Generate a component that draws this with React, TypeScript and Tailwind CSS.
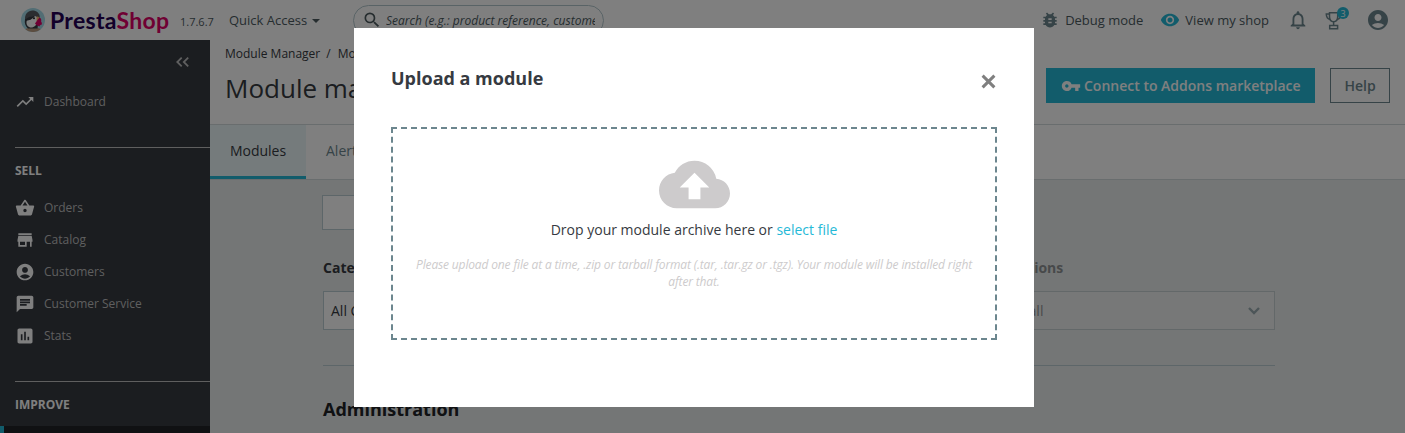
import type { ReactNode } from "react";
import type { IconType } from "react-icons";
import {
  MdAccountCircle,
  MdAssessment,
  MdBugReport,
  MdChat,
  MdCloudUpload,
  MdNotificationsNone,
  MdRemoveRedEye,
  MdSearch,
  MdShoppingBasket,
  MdStore,
  MdTrendingUp,
  MdVpnKey,
} from "react-icons/md";

function Puffin() {
  return (
    <svg className="h-6 w-6 shrink-0" viewBox="0 0 24 24">
      <circle cx="12" cy="12" r="12" fill="#a4dbe8" />
      <path d="M4.500 21.400c1-2.400 14-2.400 15 0A12 12 0 0 1 4.500 21.400z" fill="#b99a80" />
      <path d="M4 12C3.500 6 7 2.500 11.500 2.500c4 0 7 2.500 7.300 6.500L17 12z" fill="#565a60" />
      <path d="M4 11c-.8 4 .5 7.500 3 9.500h9.500l.5-4-5-3z" fill="#363a41" />
      <path d="M5.500 14c.5-4 4.500-6.500 8.500-6 2.500.5 3 3 2.500 5.500-.6 3.500-3.300 6-6.300 6-3 0-5-2.500-4.700-5.500z" fill="#fff" />
      <path d="M4 12.500c2-3.500 6-5 10-4.500-2 2.500-5 4.500-9.500 5z" fill="#363a41" />
      <path d="M15.700 8.500c1.800-.3 3 .8 3.100 2.500l-.8 2.500-2.500-.5z" fill="#f6b36a" />
      <path d="M16.500 12l2-2.500c1.800 1 2 2.500 1.600 4 .7 1 1 2 .7 3-1 .2-1.800.5-2.300 2-2-.8-4-1.800-4.500-3z" fill="#df0067" />
      <circle cx="13" cy="10.300" r="1" fill="#1b1d20" />
    </svg>
  );
}

function Trophy() {
  return (
    <svg className="h-[22px] w-[20px]" viewBox="0 0 20 22" fill="none" stroke="#6c868e" strokeWidth="1.5">
      <path d="M5.500 3.800h8.200v3.700c0 3-1.600 5.200-4.100 5.200S5.500 10.500 5.500 7.500z" />
      <path d="M5.500 5H2.300c0 3 1.200 5 4 5.500M13.700 5h3.200c0 3-1.200 5-4 5.500" />
      <path d="M9.600 12.700v3.600M5.700 16.600h7.900v3.200H5.700z" />
    </svg>
  );
}

function MenuItem({ icon: Icon, children }: { icon: IconType; children: ReactNode }) {
  return (
    <li className="flex h-8 items-center gap-[9px] pl-[15px] text-[12px] text-[#bebebe]">
      <Icon className="h-5 w-5 text-white" />
      <span>{children}</span>
    </li>
  );
}

function MenuTitle({ children }: { children: ReactNode }) {
  return (
    <h2 className="ml-[15px] border-t border-[#bebebe] pt-[14px] text-[12px] leading-[18px] font-bold text-white">
      {children}
    </h2>
  );
}

function Header() {
  return (
    <header className="flex h-10 shrink-0 items-center bg-white text-[13px] text-[#4c5a5f]">
      <div className="flex w-[229px] shrink-0 items-center pl-[21px]">
        <Puffin />
        <span className="ml-[5px] w-[120px] font-['Lato'] text-[23px] leading-10 font-bold tracking-[0.3px] text-[#250054]">
          Presta<span className="text-[#df0067]">Shop</span>
        </span>
        <span className="ml-[10px] pt-[4px] text-[11px]">1.7.6.7</span>
      </div>
      <div className="flex w-[124px] shrink-0 items-center gap-[5px] pt-px">
        Quick Access
        <span className="border-x-4 border-t-4 border-x-transparent border-t-[#4c5a5f]" />
      </div>
      <div className="flex h-[31px] w-[251px] shrink-0 items-center rounded-full border border-[#b3c7cd] pr-2 pl-2">
        <MdSearch className="h-5 w-5 shrink-0 text-[#4c5a5f]" />
        <span className="ml-1 overflow-hidden pt-px text-[12px] whitespace-nowrap italic">
          Search (e.g.: product reference, customer name…)
        </span>
      </div>
      <div className="ml-auto flex items-center pr-[15px]">
        <MdBugReport className="h-5 w-5 text-[#6c868e]" />
        <span className="ml-[5px] pt-px">Debug mode</span>
        <MdRemoveRedEye className="ml-[17px] h-5 w-5 text-[#25b9d7]" />
        <span className="ml-[5px] pt-px">View my shop</span>
        <MdNotificationsNone className="ml-[18px] h-[22px] w-[22px] text-[#6c868e]" />
        <span className="relative ml-[15px]">
          <Trophy />
          <span className="absolute -top-[2px] left-[13px] flex h-3 w-3 items-center justify-center rounded-full bg-[#25b9d7] text-[9px] leading-none text-white">
            3
          </span>
        </span>
        <MdAccountCircle className="ml-[22px] h-6 w-6 text-[#6c868e]" />
      </div>
    </header>
  );
}

function Sidebar() {
  return (
    <nav className="w-[210px] shrink-0 bg-[#363a41]">
      <div className="flex h-[43px] items-center justify-end pr-[21px]">
        <svg className="h-[10px] w-[13px]" viewBox="0 0 13 10" fill="none" stroke="#bebebe" strokeWidth="1.8">
          <path d="M5.700.7L1.300 5l4.400 4.300M12.200.7L7.800 5l4.400 4.300" />
        </svg>
      </div>
      <ul className="pt-[3px]">
        <MenuItem icon={MdTrendingUp}>Dashboard</MenuItem>
      </ul>
      <div className="h-[29px]" />
      <MenuTitle>SELL</MenuTitle>
      <ul className="pt-[12px] pb-[29px]">
        <MenuItem icon={MdShoppingBasket}>Orders</MenuItem>
        <MenuItem icon={MdStore}>Catalog</MenuItem>
        <MenuItem icon={MdAccountCircle}>Customers</MenuItem>
        <MenuItem icon={MdChat}>Customer Service</MenuItem>
        <MenuItem icon={MdAssessment}>Stats</MenuItem>
      </ul>
      <MenuTitle>IMPROVE</MenuTitle>
      <div className="mt-[12px] h-8 border-l-4 border-[#25b9d7] bg-[#202226]" />
    </nav>
  );
}

function Toolbar() {
  return (
    <div className="flex h-[85px] justify-between border-b border-[#d3dadd] bg-white pr-[15px] pl-[15px] text-[#363a41]">
      <div>
        <p className="pt-[5px] text-[12px] leading-[18px]">
          Module Manager<span className="pr-[7px] pl-[6px]">/</span>Modules
        </p>
        <h1 className="pt-[7px] text-[26px] leading-9">Module manager</h1>
      </div>
      <div className="flex gap-[15px] pt-7 text-[14px] font-semibold">
        <button className="flex h-[35px] w-[269px] items-center gap-[3px] bg-[#25b9d7] pl-[15px] whitespace-nowrap text-white">
          <MdVpnKey className="h-5 w-5" />
          Connect to Addons marketplace
        </button>
        <button className="h-[35px] w-[60px] border border-[#6c868e] text-[#6c868e]">Help</button>
      </div>
    </div>
  );
}

function Filters() {
  return (
    <div className="pt-[15px] pr-[130px] pl-[112px] text-[14px] text-[#363a41]">
      <div className="h-[35px] w-[600px] border border-[#bbcdd2] bg-white" />
      <div className="ml-px flex justify-between pt-[28px]">
        <div className="w-[300px]">
          <p className="leading-5 font-bold">Categories</p>
          <div className="mt-[13px] flex h-[39px] items-center border border-[#bbcdd2] bg-white pl-[7px]">
            All Categories
          </div>
        </div>
        <div className="w-[299px] opacity-50">
          <p className="leading-5 font-bold">Bulk Actions</p>
          <div className="mt-[13px] flex h-[39px] items-center justify-between border border-[#a5b7bc] bg-white/50 pr-[14px] pl-[9px]">
            Uninstall
            <svg className="h-2 w-3" viewBox="0 0 12 8" fill="none" stroke="#4c6a75" strokeWidth="2.4">
              <path d="M1 1l5 5 5-5" />
            </svg>
          </div>
        </div>
      </div>
      <h2 className="mt-[35px] ml-px border-t border-[#bbcdd2] pt-[31px] text-[18px] leading-6 font-bold text-[#202226]">
        Administration
      </h2>
    </div>
  );
}

function UploadDialog() {
  return (
    <div className="fixed inset-0 flex items-start justify-center bg-black/50 pt-7 pr-[17px]">
      <section className="h-[379px] w-[680px] bg-white px-[37px] text-[#363a41]">
        <div className="flex h-[99px] items-start justify-between">
          <h2 className="pt-[38px] text-[18px] leading-6 font-bold">Upload a module</h2>
          <svg className="mt-[46px] mr-px h-[15px] w-[15px]" viewBox="0 0 14 14" stroke="#7f7f7f" strokeWidth="2.800">
            <path d="M1.500 1.500l11 11M12.500 1.500l-11 11" />
          </svg>
        </div>
        <div className="flex h-[213px] flex-col items-center border-2 border-dashed border-[#6c868e] pt-[20px] text-center">
          <MdCloudUpload className="h-[71px] w-[71px] text-[#cdcbcc]" />
          <p className="text-[14px] leading-5">
            Drop your module archive here or <a className="text-[#25b9d7]">select file</a>
          </p>
          <p className="w-[572px] pt-[16px] text-[12px] leading-[17px] tracking-[-0.15px] text-[#cdcbcc] italic">
            Please upload one file at a time, .zip or tarball format (.tar, .tar.gz or .tgz). Your module will be
            installed right after that.
          </p>
        </div>
      </section>
    </div>
  );
}

export default function App() {
  return (
    <div className="flex h-[433px] flex-col overflow-hidden font-['Open_Sans',sans-serif]">
      <Header />
      <div className="flex min-h-0 flex-1">
        <Sidebar />
        <main className="flex-1 bg-[#e9edec]">
          <Toolbar />
          <div className="flex h-[55px] border-b border-[#d3dadd] bg-white text-[14px] text-[#6c868e]">
            <div className="flex w-24 items-center justify-center border-b-[3px] border-[#25b9d7] bg-[#ebf7f9] text-[#363a41]">
              Modules
            </div>
            <div className="flex flex-1 items-center pb-[3px] pl-5">Alerts</div>
          </div>
          <Filters />
        </main>
      </div>
      <UploadDialog />
    </div>
  );
}
